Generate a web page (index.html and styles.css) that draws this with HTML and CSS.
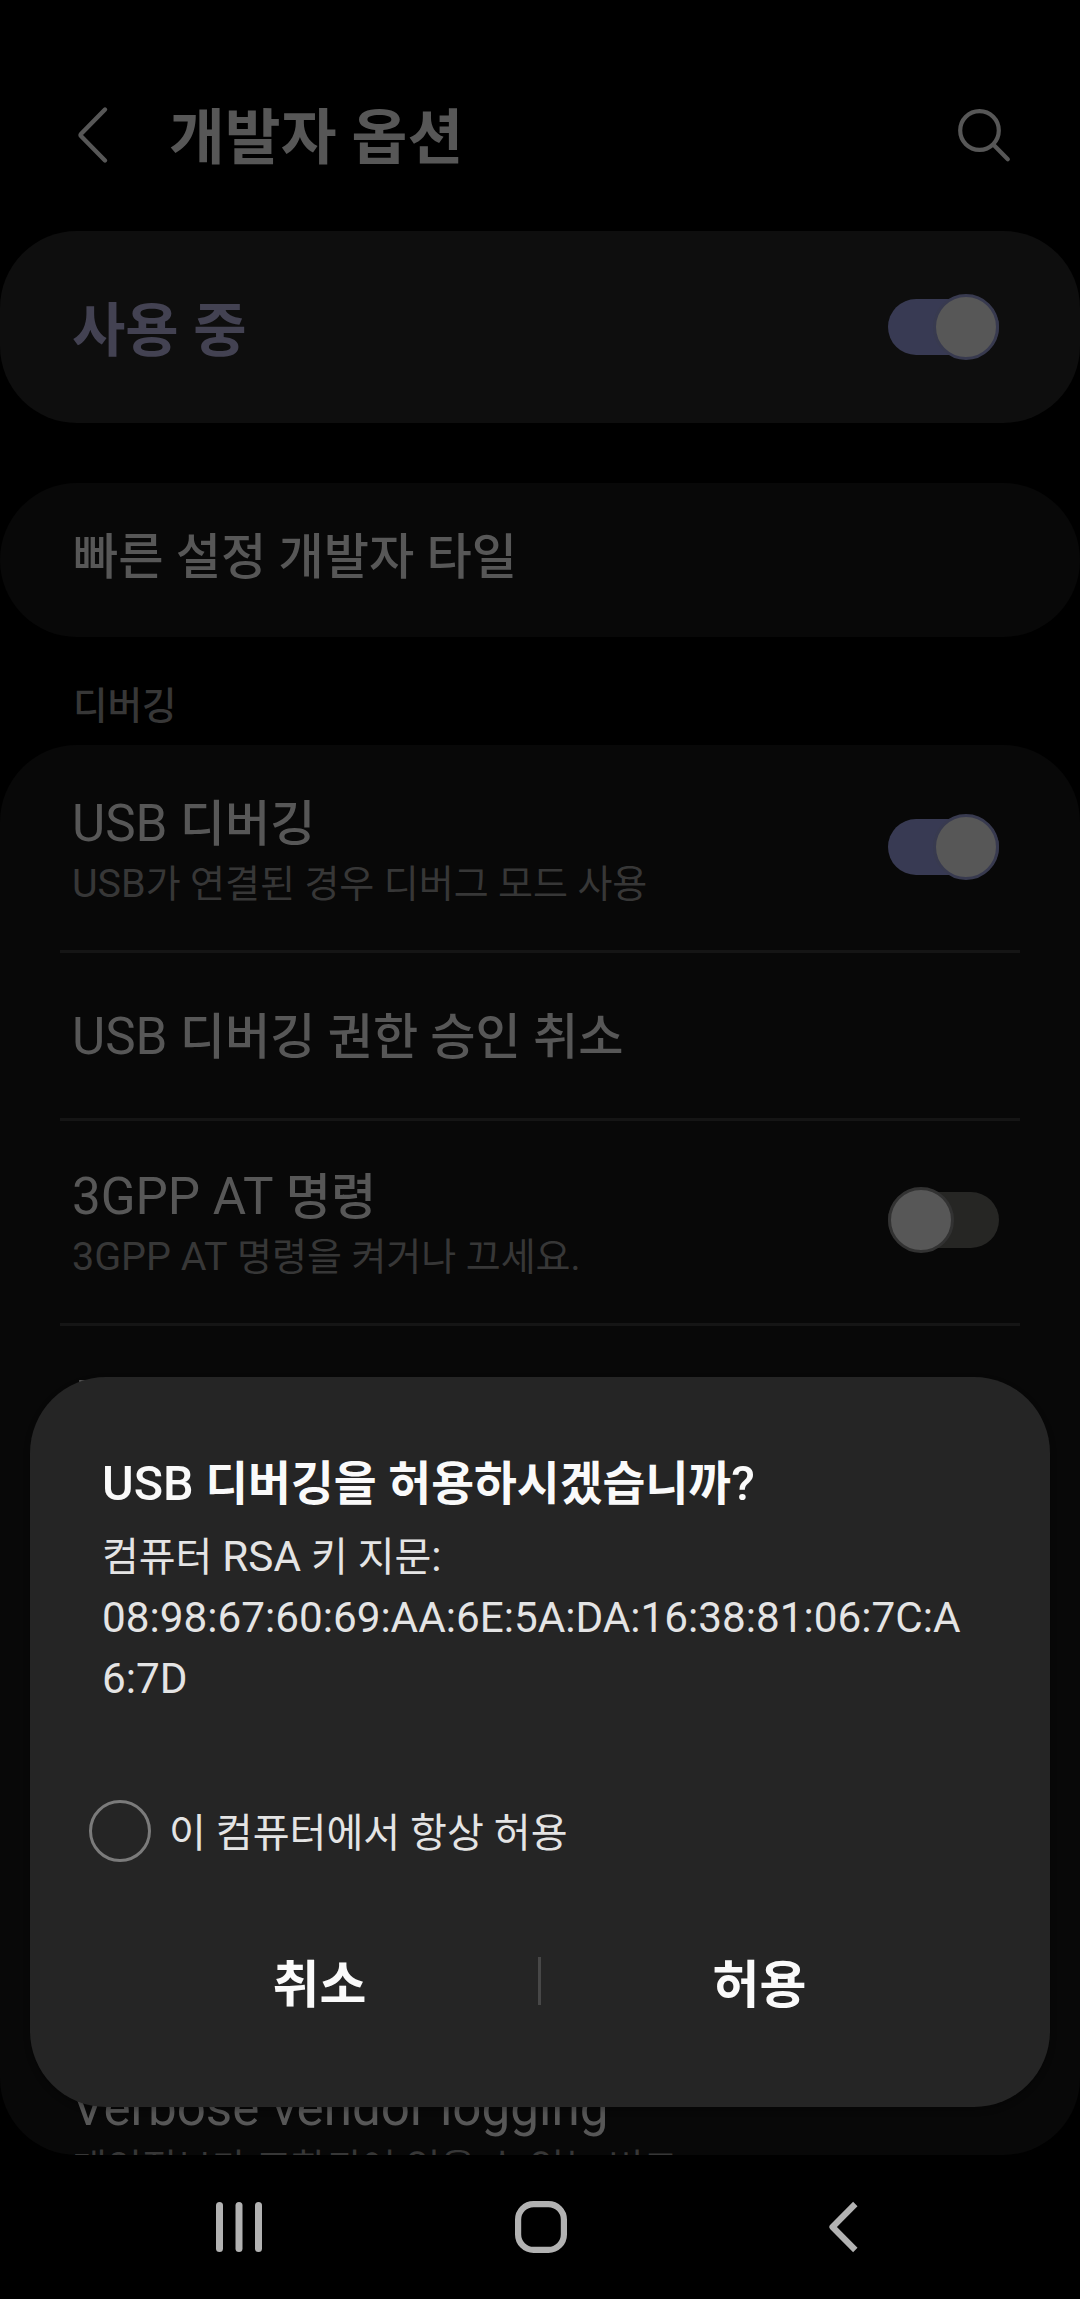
FILE: index.html
```html
<!DOCTYPE html>
<html lang="ko">
<head>
<meta charset="utf-8">
<title>개발자 옵션</title>
<link rel="stylesheet" href="styles.css">
</head>
<body>
<div class="screen">
  <main class="settings">
    <header class="topbar">
      <svg class="topbar-back" width="34" height="60" viewBox="0 0 34 60" fill="none" stroke="#575757" stroke-width="4.4" stroke-linecap="round" stroke-linejoin="round"><path d="M29 4.5 5.2 28.7Q4 30 5.2 31.3L29 55.500"/></svg>
      <h1 class="topbar-title">개발자 옵션</h1>
      <svg class="topbar-search" width="60" height="60" viewBox="0 0 60 60" fill="none" stroke="#575757" stroke-width="4.2" stroke-linecap="round"><circle cx="25.500" cy="25.500" r="19.300"/><path d="M39.500 39.700 53.800 54.300"/></svg>
    </header>

    <section class="card card-master">
      <span class="master-label">사용 중</span>
      <span class="toggle toggle-on"><span class="thumb"></span></span>
    </section>

    <section class="card card-single"><span class="row-title">빠른 설정 개발자 타일</span></section>

    <h2 class="section-label">디버깅</h2>

    <section class="card card-list">
      <div class="row">
        <div class="row-text">
          <span class="row-title"><span class="latin">USB</span> 디버깅</span>
          <span class="row-sub"><span class="latin">USB</span>가 연결된 경우 디버그 모드 사용</span>
        </div>
        <span class="toggle toggle-on"><span class="thumb"></span></span>
      </div>
      <div class="row row-short">
        <div class="row-text">
          <span class="row-title"><span class="latin">USB</span> 디버깅 권한 승인 취소</span>
        </div>
      </div>
      <div class="row">
        <div class="row-text">
          <span class="row-title"><span class="latin">3GPP AT</span> 명령</span>
          <span class="row-sub"><span class="latin">3GPP AT</span> 명령을 켜거나 끄세요.</span>
        </div>
        <span class="toggle"><span class="thumb"></span></span>
      </div>
      <div class="row row-hidden">
        <div class="row-text"><span class="row-title">무선 디버깅</span></div>
      </div>
      <div class="row row-last">
        <div class="row-text">
          <span class="row-title"><span class="latin">Verbose vendor logging</span></span>
          <span class="row-sub">개인정보가 포함되어 있을 수 있는 버그</span>
        </div>
      </div>
    </section>
  </main>

  <nav class="navbar">
    <svg width="50" height="54" viewBox="0 0 50 54" fill="#b2b2b2"><rect x="2" y="2" width="7" height="50" rx="3.500"/><rect x="21.500" y="2" width="7" height="50" rx="3.500"/><rect x="41" y="2" width="7" height="50" rx="3.500"/></svg>
    <svg class="nav-home" width="54" height="54" viewBox="0 0 54 54" fill="none" stroke="#b2b2b2" stroke-width="6.200"><rect x="4.100" y="4.100" width="45.800" height="45.800" rx="15.500"/></svg>
    <svg width="34" height="54" viewBox="0 0 34 54" fill="none" stroke="#b2b2b2" stroke-width="6.200" stroke-linecap="butt"><path d="M29.300 4 6.500 27 29.300 50" stroke-linejoin="round"/></svg>
  </nav>

  <div class="dialog" role="dialog">
    <h2 class="dialog-title"><span class="latin">USB</span> 디버깅을 허용하시겠습니까<span class="latin">?</span></h2>
    <p class="dialog-body">컴퓨터 <span class="latin">RSA</span> 키 지문<span class="latin">:</span><br><span class="latin">08:98:67:60:69:AA:6E:5A:DA:16:38:81:06:7C:A<br>6:7D</span></p>
    <label class="check"><span class="check-ring"></span><span class="check-label">이 컴퓨터에서 항상 허용</span></label>
    <div class="actions">
      <button class="action" type="button">취소</button>
      <span class="actions-split"></span>
      <button class="action" type="button">허용</button>
    </div>
  </div>
</div>
</body>
</html>
```
FILE: styles.css
```css
* { box-sizing: border-box; }
body {
  margin: 0;
  background: #000;
  font-family: Roboto, "Noto Sans CJK KR", sans-serif;
}
h1, h2, p { margin: 0; }

.screen {
  position: relative;
  width: 1080px;
  height: 2299px;
  overflow: hidden;
  display: flex;
  flex-direction: column;
  background: #000;
}
.settings {
  height: 2155px;
  overflow: hidden;
  display: flex;
  flex-direction: column;
}

.topbar {
  height: 231px;
  flex: none;
  display: flex;
  align-items: flex-start;
  padding: 105px 66px 0 76px;
}
.topbar-title {
  flex: 1;
  margin: -6px 0 0 59px;
  font-size: 60.7px;
  font-weight: 700;
  line-height: 80px;
  color: #575757;
}
.topbar-search { flex: none; }

.card {
  flex: none;
  border-radius: 77px;
  background: #080808;
}
.card-master {
  height: 192px;
  margin-bottom: 60px;
  padding: 0 81px 0 72px;
  display: flex;
  align-items: center;
  justify-content: space-between;
  background: #0e0e0e;
}
.master-label {
  padding-top: 8px;
  font-size: 58px;
  font-weight: 700;
  line-height: 76px;
  color: #434252;
}
.card-single {
  height: 154px;
  padding: 43px 73px 0;
}
.section-label {
  flex: none;
  height: 108px;
  padding: 43px 73px 0;
  font-size: 37.5px;
  font-weight: 500;
  line-height: 52px;
  color: #373737;
}
.card-list {
  height: 1410px;
  padding: 3px 60px 0;
}

.row {
  height: 205px;
  padding: 0 21px 0 12px;
  border-bottom: 3px solid #151515;
  display: flex;
  justify-content: space-between;
}
.row-short { height: 168px; }
.row-hidden { height: 706px; border: 0; }
.row-last { border: 0; }
.row-text {
  display: flex;
  flex-direction: column;
  padding-top: 45px;
}
.row-short .row-text { padding-top: 53px; }
.row-title {
  font-size: 49.2px;
  font-weight: 500;
  line-height: 62px;
  color: #575757;
  white-space: nowrap;
}
.row-sub {
  margin-top: 5px;
  font-size: 38px;
  line-height: 48px;
  color: #373737;
  white-space: nowrap;
}
.latin { font-size: 1.04em; font-weight: 400; line-height: 1; }

.toggle {
  position: relative;
  flex: none;
  width: 111px;
  height: 56px;
  border-radius: 28px;
  background: #262624;
}
.row .toggle { margin-top: 71px; }
.toggle-on { background: #383a53; }
.thumb {
  position: absolute;
  left: 0;
  top: -5px;
  width: 66px;
  height: 66px;
  border: 3px solid #323232;
  border-radius: 50%;
  background: #575757;
}
.toggle-on .thumb {
  left: auto;
  right: 0;
  border-color: #383a4f;
}

.navbar {
  height: 144px;
  padding: 0 220px 0 214px;
  display: flex;
  align-items: center;
  justify-content: space-between;
}
.nav-home { margin-right: 9px; }

.dialog {
  position: absolute;
  left: 30px;
  top: 1377px;
  width: 1020px;
  height: 730px;
  padding: 77px 72px 0;
  border-radius: 76px;
  background: #252525;
  box-shadow: 0 3px 6px rgba(0, 0, 0, .3);
}
.dialog-title {
  font-size: 46.6px;
  font-weight: 700;
  line-height: 60px;
  color: #fafafa;
  white-space: nowrap;
}
.dialog-title .latin { font-weight: 500; }
.dialog-body {
  margin-top: 13px;
  font-size: 40px;
  line-height: 61px;
  color: #e4e4e4;
  white-space: nowrap;
}
.dialog-body .latin { font-size: 42.25px; }
.check {
  margin: 90px 0 0 -13px;
  height: 62px;
  display: flex;
  align-items: center;
  gap: 18px;
}
.check-ring {
  width: 62px;
  height: 62px;
  border: 3px solid #7b7b7b;
  border-radius: 50%;
}
.check-label {
  padding-top: 5px;
  font-size: 40.1px;
  line-height: 56px;
  color: #e4e4e4;
}
.actions {
  margin: 77px 0 0 -1px;
  display: flex;
  align-items: center;
}
.action {
  flex: 1;
  padding: 9px 0 0;
  border: 0;
  background: none;
  font: 700 51px/75px Roboto, "Noto Sans CJK KR", sans-serif;
  color: #fafafa;
}
.actions-split {
  width: 3px;
  height: 48px;
  background: #474747;
}
```
